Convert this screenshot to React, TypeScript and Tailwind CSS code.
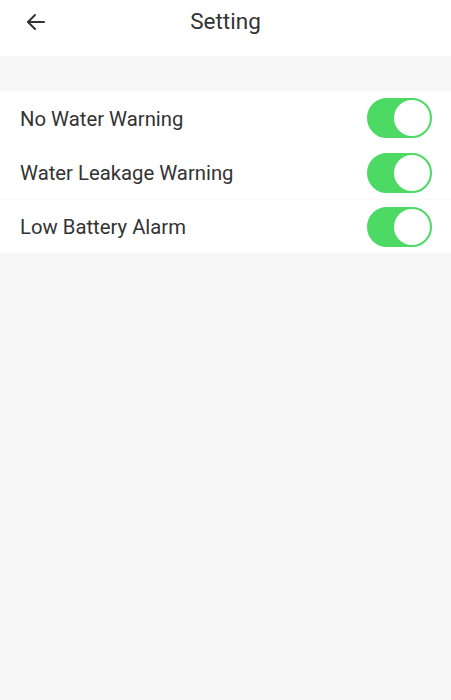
import React, { useState } from 'react'

const items = ['No Water Warning', 'Water Leakage Warning', 'Low Battery Alarm']

function Toggle({ on, onClick }: { on: boolean; onClick: () => void }) {
  return (
    <button
      onClick={onClick}
      className={`flex h-[40px] w-[65px] items-center rounded-full border-2 ${
        on ? 'justify-end border-[#4cd964] bg-[#4cd964]' : 'justify-start border-[#e5e5e5] bg-[#e5e5e5]'
      }`}
    >
      <span className="h-[36px] w-[36px] rounded-full bg-white" />
    </button>
  )
}

export default function App() {
  const [state, setState] = useState([true, true, true])

  return (
    <div className="min-h-[700px] bg-[#f7f7f7] font-['Roboto',sans-serif] text-[#333333]">
      {/* Header */}
      <div className="relative flex h-[56px] items-center justify-center bg-white">
        <button className="absolute left-[22px] top-[8px] p-[2px]">
          <svg width="24" height="24" viewBox="0 0 24 24" fill="none" stroke="#333" strokeWidth="2" strokeLinecap="round" strokeLinejoin="round">
            <path d="M20 12H4" />
            <path d="M11 5l-7 7 7 7" />
          </svg>
        </button>
        <h1 className="-mt-[13px] text-[22.5px]">Setting</h1>
      </div>

      <div className="h-[35px]" />

      {/* Settings list */}
      <div className="bg-white">
        {items.map((label, i) => (
          <div
            key={label}
            className={`flex h-[54px] items-center justify-between pl-[20px] pr-[19px] ${
              i > 0 ? 'border-t border-[#fafafa]' : ''
            }`}
          >
            <span className="mt-[2px] text-[20.3px]">{label}</span>
            <Toggle
              on={state[i]}
              onClick={() => setState(s => s.map((v, j) => (j === i ? !v : v)))}
            />
          </div>
        ))}
      </div>
    </div>
  )
}
